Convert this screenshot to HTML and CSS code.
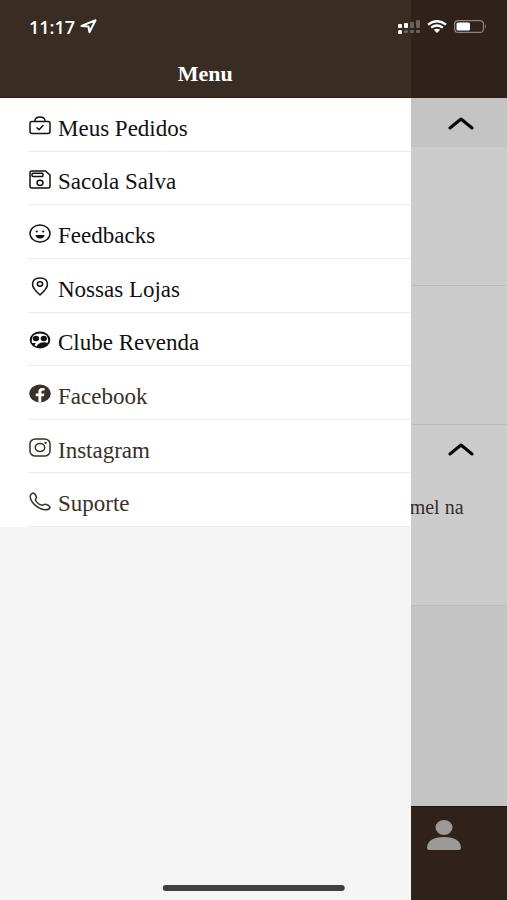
FILE: index.html
```html
<!DOCTYPE html>
<html lang="pt-BR">
<head>
<meta charset="utf-8">
<meta name="viewport" content="width=device-width, initial-scale=1">
<title>Menu</title>
<link rel="stylesheet" href="styles.css">
</head>
<body>
<div class="app">
  <div class="status">
    <div class="status-left">
      <span>11:17</span>
      <svg width="17" height="15" viewBox="0 0 17 15"><path d="M1.500 7 15.500 1.200 9.400 13.200 8.500 7.600z" fill="none" stroke="#fff" stroke-width="2" stroke-linejoin="round"/></svg>
    </div>
    <div class="status-right">
      <svg width="22" height="14" viewBox="0 0 22 14">
        <g fill="#fff"><rect y="4" width="4" height="4" rx="1"/><rect x="6" y="3" width="4" height="5" rx="1"/><rect y="10" width="4" height="4" rx="1.5"/></g>
        <g fill="#6a625b"><rect x="12" y="2" width="4" height="6" rx="1"/><rect x="18" width="4" height="8" rx="1"/><rect x="6" y="10" width="4" height="3" rx="1"/><rect x="12" y="10" width="4" height="3" rx="1"/><rect x="18" y="10" width="4" height="3" rx="1"/></g>
      </svg>
      <svg width="20" height="13" viewBox="0 0 20 13"><path d="M1 4.6Q10-2.2 19 4.6M4.2 7.6q5.8-4.4 11.6 0" fill="none" stroke="#fff" stroke-width="2.4"/><path d="M6.8 9.8q3.2-2.2 6.4 0L10 13z" fill="#fff"/></svg>
      <svg width="33" height="13" viewBox="0 0 33 13"><rect x=".6" y=".6" width="28.8" height="11.8" rx="3.5" fill="none" stroke="#8b8580" stroke-width="1.2"/><rect x="2.5" y="2.5" width="13.5" height="8" rx="1.5" fill="#fff"/><path d="M31 4q2 2.5 0 5z" fill="#8b8580"/></svg>
    </div>
  </div>

  <aside class="drawer">
    <header class="bar"><h1>Menu</h1></header>
    <nav class="menu">
      <a href="#"><svg viewBox="0 0 22 19"><path d="M3 5.5h16q2 0 2 2v8q0 2-2 2H3q-2 0-2-2v-8q0-2 2-2zM6 5.500V4.300Q6.500 1 11 1t5 3.300v1.200M8 11.800l2 2 4-4.300"/></svg><span>Meus Pedidos</span></a>
      <a href="#"><svg viewBox="0 0 22 19"><path d="M3 1h13.500L21 5v11q0 2-2 2H3q-2 0-2-2V3q0-2 2-2z"/><rect x="3" y="3.200" width="11" height="3.400" rx="1"/><ellipse cx="11" cy="12.800" rx="3" ry="2.600"/></svg><span>Sacola Salva</span></a>
      <a href="#"><svg viewBox="0 0 22 19"><ellipse cx="11" cy="9.500" rx="10" ry="8.500"/><path class="solid" d="M6.500 11h9q-.5 3.600-4.500 3.600t-4.500-3.600z"/><ellipse class="solid" cx="7.800" cy="7.500" rx="1.100" ry="1"/><ellipse class="solid" cx="14.200" cy="7.500" rx="1.100" ry="1"/></svg><span>Feedbacks</span></a>
      <a href="#"><svg viewBox="0 0 22 19"><path d="M11 18Q3.500 11.300 3.500 7.200 3.800 1 11 1t7.500 6.200Q18.500 11.300 11 18z"/><ellipse cx="11" cy="7" rx="2.600" ry="2.200"/></svg><span>Nossas Lojas</span></a>
      <a href="#"><svg viewBox="0 0 22 19"><ellipse class="solid" cx="11" cy="9" rx="10.300" ry="8.500"/><path d="M2.700 9.500Q2.700 2.500 11 2.500t8.300 7q-.2 1.800-1 2.400-2.600-1-6.800-.2-2.800 1-4 3.600l-1.800-.9q.3-1.600 1.200-2.300-2-.3-3.700 0-.5-1-.5-2.600z" fill="#fff" stroke="none"/><ellipse class="solid" cx="7" cy="7.500" rx="3.100" ry="2.800"/><ellipse class="solid" cx="14.800" cy="7.500" rx="3.100" ry="2.800"/></svg><span>Clube Revenda</span></a>
      <a href="#" class="soft"><svg viewBox="0 0 22 19"><ellipse class="solid" cx="11" cy="9.500" rx="10.800" ry="9"/><path d="M9.400 18.500v-6.300H6.700V9.500h2.700V7.600q0-3.600 4-3.600l2.200.2v2.200H14q-1.700 0-1.700 1.500v1.600h3.100l-.5 2.700h-2.600v6.300z" fill="#fff" stroke="none"/></svg><span>Facebook</span></a>
      <a href="#" class="soft"><svg viewBox="0 0 22 19"><rect x="1" y="1" width="20" height="17" rx="5.500" ry="4.800"/><ellipse cx="11" cy="9.500" rx="4.700" ry="4"/><ellipse class="solid" cx="16.600" cy="4.800" rx="1.300" ry="1.100"/></svg><span>Instagram</span></a>
      <a href="#" class="soft"><svg viewBox="0 0 22 19"><path d="M1.200 4Q2 1.500 4 1c1.500.2 2.800 2.200 3.400 4 .2 1.500-1.200 2-1 3 1.200 2.500 3.800 4.700 6.800 5.300 1.500 0 2-1.300 3.300-1.100 2 .5 4 1.700 4.600 3-.5 1.800-2.500 2.800-5.300 2.600C8.700 17 1 10 1.200 4z"/></svg><span>Suporte</span></a>
    </nav>
  </aside>

  <main class="page">
    <div class="bar"></div>
    <section class="head"><button type="button" aria-label="Recolher"><svg width="26" height="14" viewBox="0 0 26 14"><path d="m2 12 11-9 11 9"/></svg></button></section>
    <section class="block"></section>
    <section class="block"></section>
    <section class="detail">
      <button type="button" aria-label="Recolher"><svg width="26" height="14" viewBox="0 0 26 14"><path d="m2 12 11-9 11 9"/></svg></button>
      <p>mel na</p>
    </section>
    <div class="rest"></div>
    <nav class="tabs"><a href="#" aria-label="Perfil"><svg width="34" height="30" viewBox="0 0 34 30"><ellipse cx="17" cy="7.500" rx="8.500" ry="7.500"/><path d="M0 27.500Q1 17 17 17t17 10.500q0 2.500-2 2.500H2q-2 0-2-2.500z"/></svg></a></nav>
  </main>
  <div class="home"></div>
</div>
</body>
</html>
```

FILE: styles.css
```css
* { box-sizing: border-box; }
body { margin: 0; font-family: "Liberation Serif", serif; color: #111; }
.app {
  position: relative;
  display: grid;
  grid-template-columns: 81% 1fr;
  min-height: 100vh;
}
.status {
  position: absolute;
  inset: 0 0 auto 0;
  display: flex;
  justify-content: space-between;
  align-items: center;
  height: 53px;
  padding: 0 20px 0 29px;
  color: #fff;
}
.status-left, .status-right { display: flex; align-items: center; }
.status-left { gap: 5px; font: 600 18px/20px "Open Sans", sans-serif; }
.status-right { gap: 7px; }
.bar {
  display: flex;
  align-items: flex-end;
  justify-content: center;
  height: 98px;
  padding-bottom: 11px;
  background: #392d23;
  border-bottom: 1px solid #291f18;
}
.bar h1 { margin: 0; font-size: 22px; line-height: 24px; color: #fff; }
.drawer { background: #f5f5f5; }
.menu {
  display: grid;
  grid-auto-rows: 1fr;
  min-height: 429px;
  padding-left: 28px;
  background: #fff;
}
.menu a {
  display: flex;
  align-items: center;
  gap: 7px;
  padding: 9px 0 0 1px;
  border-bottom: 1px solid #ebebeb;
  color: #111;
  font-size: 23px;
  line-height: 26px;
  text-decoration: none;
}
.menu svg {
  width: 22px;
  height: 19px;
  margin-bottom: 6px;
  fill: none;
  stroke: currentColor;
  stroke-width: 1.5;
  stroke-linecap: round;
  stroke-linejoin: round;
}
.menu .solid { fill: currentColor; stroke: none; }
.menu .soft { color: #3a3027; }
.page {
  display: flex;
  flex-direction: column;
  min-width: 0;
  overflow: hidden;
  background: #c4c4c4;
}
.page .bar { background: #2e221a; }
.page button {
  display: block;
  padding: 0;
  border: 0;
  background: none;
  line-height: 0;
}
.page button svg {
  fill: none;
  stroke: #050505;
  stroke-width: 3;
  stroke-linecap: round;
  stroke-linejoin: round;
}
.head { height: 49px; padding: 18px 0 0 37px; }
.block { height: 139px; background: #ccc; border-bottom: 1px solid #bbb; }
.detail {
  height: 181px;
  padding: 17px 0 0 37px;
  background: #ccc;
  border-bottom: 1px solid #bbb;
}
.detail p {
  margin: 39px 0 0 -38px;
  font-size: 20px;
  line-height: 24px;
  color: #332f2b;
  white-space: nowrap;
}
.rest { flex: 1; }
.tabs {
  height: 94px;
  padding: 13px 0 0 16px;
  background: #2e221a;
  border-top: 1px solid #1c1510;
}
.tabs svg { display: block; fill: #9d9995; }
.home {
  position: absolute;
  bottom: 9px;
  left: 50%;
  width: 36%;
  height: 6px;
  border-radius: 3px;
  background: #414141;
  transform: translateX(-50%);
}
```
